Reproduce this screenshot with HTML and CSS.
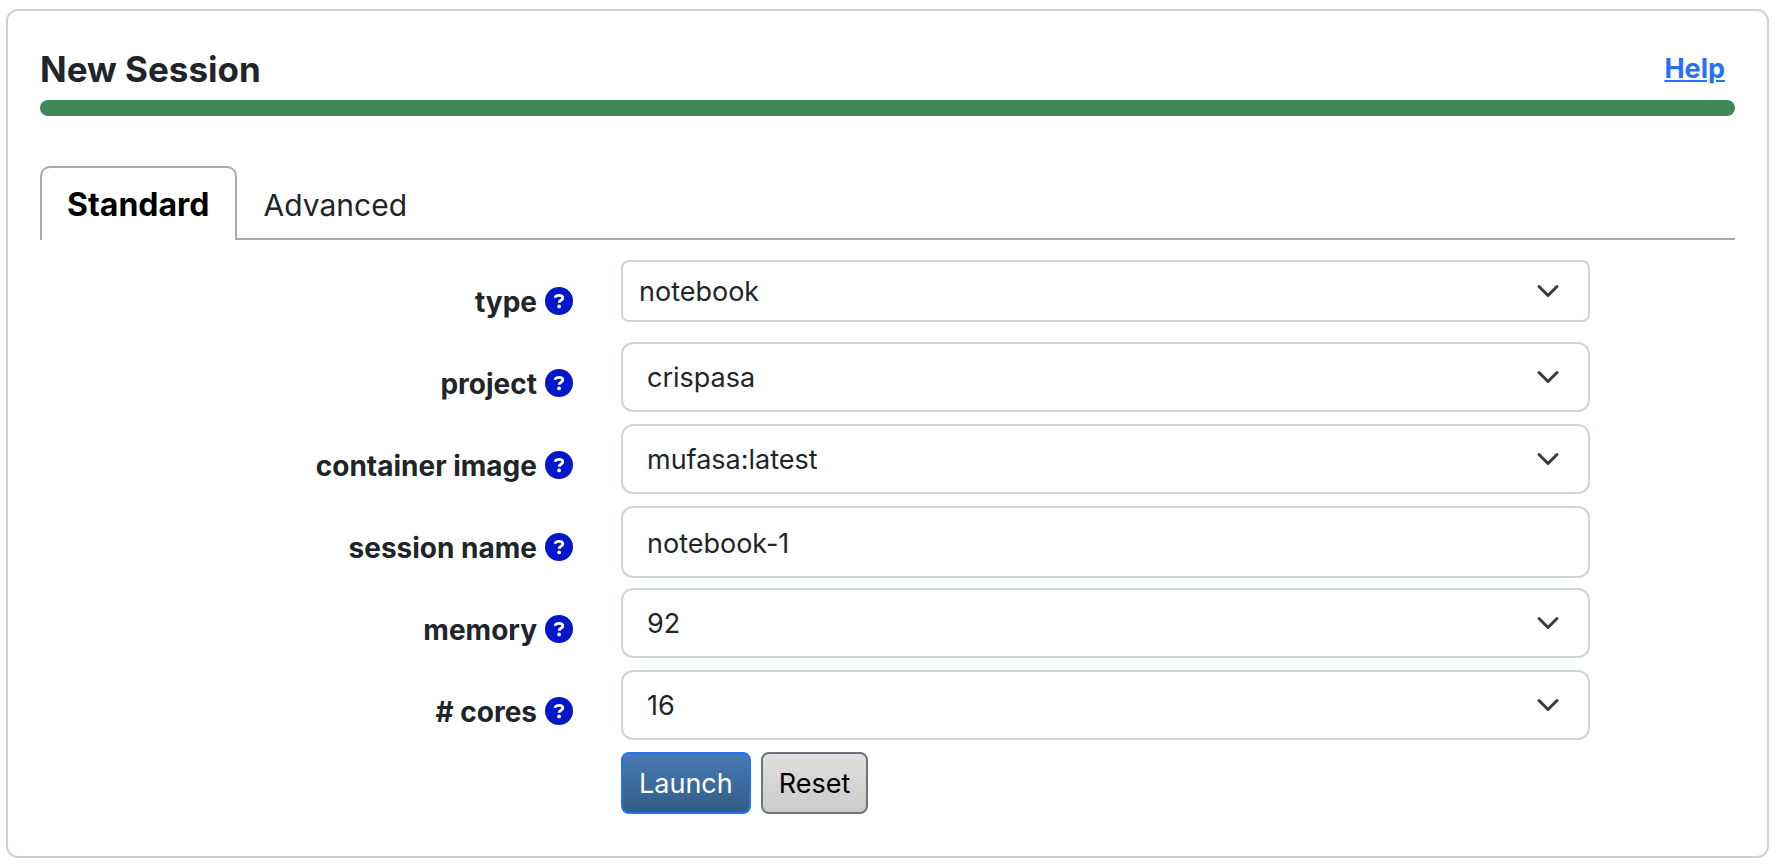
FILE: index.html
```html
<!DOCTYPE html>
<html lang="en">
<head>
<meta charset="utf-8">
<title>New Session</title>
<link rel="stylesheet" href="styles.css">
</head>
<body>
<svg class="sprite" aria-hidden="true">
  <symbol id="help-icon" viewBox="0 0 28 28">
    <circle cx="14" cy="14" r="14" fill="#0018c8"/>
    <path d="M10 10.800c.4-1.700 1.800-2.500 3.900-2.500 2.400 0 3.900 1 3.900 2.700 0 2.400-3.700 2.200-3.700 4.700" fill="none" stroke="#fff" stroke-width="2.800"/>
    <circle cx="14.100" cy="19.400" r="1.900" fill="#fff"/>
  </symbol>
</svg>
<main class="card">
  <header class="card-header">
    <h1 class="title">New Session</h1>
    <a class="help-link" href="#help">Help</a>
  </header>
  <div class="status-bar"></div>
  <div class="tabs" role="tablist">
    <button class="tab tab-active" type="button" role="tab" aria-selected="true">Standard</button>
    <button class="tab" type="button" role="tab" aria-selected="false">Advanced</button>
  </div>
  <form class="form">
    <div class="row">
      <label class="label" for="type"><span class="label-text">type</span><svg class="icon"><use href="#help-icon"/></svg></label>
      <div class="field"><select class="control select compact" id="type"><option>notebook</option></select></div>
    </div>
    <div class="row">
      <label class="label" for="project"><span class="label-text">project</span><svg class="icon"><use href="#help-icon"/></svg></label>
      <div class="field"><select class="control select" id="project"><option>crispasa</option></select></div>
    </div>
    <div class="row">
      <label class="label" for="image"><span class="label-text">container image</span><svg class="icon"><use href="#help-icon"/></svg></label>
      <div class="field"><select class="control select" id="image"><option>mufasa:latest</option></select></div>
    </div>
    <div class="row">
      <label class="label" for="name"><span class="label-text">session name</span><svg class="icon"><use href="#help-icon"/></svg></label>
      <div class="field"><input class="control input" id="name" type="text" value="notebook-1"></div>
    </div>
    <div class="row">
      <label class="label" for="memory"><span class="label-text">memory</span><svg class="icon"><use href="#help-icon"/></svg></label>
      <div class="field"><select class="control select" id="memory"><option>92</option></select></div>
    </div>
    <div class="row">
      <label class="label" for="cores"><span class="label-text"># cores</span><svg class="icon"><use href="#help-icon"/></svg></label>
      <div class="field"><select class="control select" id="cores"><option>16</option></select></div>
    </div>
    <div class="row">
      <div class="field actions">
        <button class="button launch" type="submit">Launch</button>
        <button class="button reset" type="reset">Reset</button>
      </div>
    </div>
  </form>
</main>
</body>
</html>
```
FILE: styles.css
```css
* {
  box-sizing: border-box;
}

body {
  margin: 0;
  padding: 9px 9px 8px 6px;
  background: #fff;
  color: #212529;
  font: 27px/42px Inter, "Liberation Sans", sans-serif;
}

.sprite {
  display: none;
}

.card {
  padding: 32px 32px 22px;
  border: 2px solid #d0d0d0;
  border-radius: 12px;
}

.card-header {
  display: flex;
  justify-content: space-between;
  align-items: center;
  padding-right: 10px;
}

.title {
  margin: 0;
  font-size: 35px;
  font-weight: 700;
  line-height: 52px;
}

.help-link {
  color: #2970f6;
  font-weight: 700;
}

.status-bar {
  height: 16px;
  margin: 5px 0 50px;
  border-radius: 8px;
  background: #42875a;
}

.tabs {
  display: flex;
  height: 74px;
  box-shadow: inset 0 -2px #a9a9a9;
}

.tab {
  padding: 2px 25px 0;
  border: 2px solid transparent;
  border-bottom: 0;
  border-radius: 10px 10px 0 0;
  background: transparent;
  color: #212529;
  font: inherit;
  font-size: 30px;
}

.tab-active {
  border-color: #a9a9a9;
  background: #fff;
  color: #000;
  font-size: 32px;
  font-weight: 700;
}

.form {
  padding-top: 20px;
}

.row {
  display: grid;
  grid-template-columns: minmax(0, 4fr) minmax(0, 7fr) minmax(0, 1fr);
  min-height: 82px;
  margin: 0 -24px;
}

.label {
  display: flex;
  justify-content: flex-end;
  align-items: center;
  gap: 8px;
  padding: 0 24px;
  font-size: 28px;
  font-weight: 700;
}

.label-text {
  padding-top: 2px;
}

.icon {
  width: 28px;
  height: 28px;
}

.field {
  grid-column: 2;
  padding: 0 24px;
}

.control {
  display: block;
  width: 100%;
  height: 70px;
  padding: 2px 72px 0 24px;
  border: 2px solid #ced4da;
  border-radius: 12px;
  background-color: #fff;
  color: #212529;
  font: inherit;
}

.select {
  appearance: none;
  background-image: url("data:image/svg+xml,%3Csvg xmlns='http://www.w3.org/2000/svg' viewBox='0 0 16 16'%3E%3Cpath fill='none' stroke='%23343a40' stroke-linecap='round' stroke-linejoin='round' stroke-width='2' d='m2 5 6 6 6-6'/%3E%3C/svg%3E");
  background-repeat: no-repeat;
  background-position: right 24px center;
  background-size: 32px 24px;
}

.compact {
  height: 62px;
  padding-left: 16px;
  border-radius: 8px;
}

.input {
  height: 72px;
  padding-right: 24px;
}

.actions {
  display: flex;
  align-items: flex-start;
  gap: 10px;
}

.button {
  height: 62px;
  padding: 2px 16px 0;
  border: 2px solid;
  border-radius: 8px;
  font: inherit;
}

.launch {
  border-color: #2970f6;
  background: linear-gradient(#477bb4, #335c86);
  color: #fff;
}

.reset {
  border-color: #6c757d;
  background: linear-gradient(#e0e0e0, #cbcbcb);
  color: #000;
}
```
